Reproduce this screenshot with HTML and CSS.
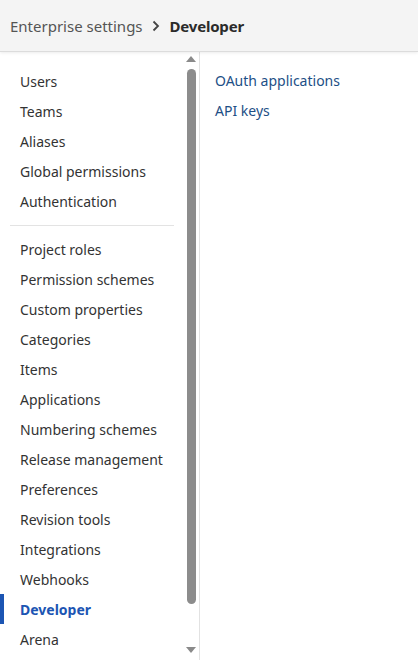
FILE: index.html
```html
<!DOCTYPE html>
<html>
<head>
<meta charset="utf-8">
<link rel="stylesheet" href="styles.css">
</head>
<body>
<header class="topbar">
  <span class="crumb">Enterprise settings</span>
  <svg class="chev" width="8" height="12" viewBox="0 0 8 12"><path d="M1.5 1.5 L6 6 L1.5 10.5" fill="none" stroke="#444" stroke-width="1.8"/></svg>
  <span class="current">Developer</span>
</header>
<div class="main">
  <aside class="side">
    <nav class="nav">
      <div class="group">
        <a class="item">Users</a>
        <a class="item">Teams</a>
        <a class="item">Aliases</a>
        <a class="item">Global permissions</a>
        <a class="item">Authentication</a>
      </div>
      <div class="divider"></div>
      <div class="group">
        <a class="item">Project roles</a>
        <a class="item">Permission schemes</a>
        <a class="item">Custom properties</a>
        <a class="item">Categories</a>
        <a class="item">Items</a>
        <a class="item">Applications</a>
        <a class="item">Numbering schemes</a>
        <a class="item">Release management</a>
        <a class="item">Preferences</a>
        <a class="item">Revision tools</a>
        <a class="item">Integrations</a>
        <a class="item">Webhooks</a>
        <a class="item active">Developer</a>
        <a class="item">Arena</a>
      </div>
    </nav>
    <div class="scrollbar">
      <div class="arrow up"></div>
      <div class="thumb"></div>
      <div class="arrow down"></div>
    </div>
  </aside>
  <section class="content">
    <a class="link">OAuth applications</a>
    <a class="link">API keys</a>
  </section>
</div>
</body>
</html>
```
FILE: styles.css
```css
html, body {
  margin: 0;
  padding: 0;
  height: 100%;
}
body {
  font-family: "Noto Sans", "Open Sans", sans-serif;
  background: #fff;
  width: 418px;
  height: 660px;
  overflow: hidden;
  display: flex;
  flex-direction: column;
}
.topbar {
  height: 51px;
  flex: none;
  background: #f4f4f4;
  border-bottom: 1px solid #dcdcdc;
  box-shadow: 0 1px 3px rgba(0,0,0,0.08);
  display: flex;
  align-items: center;
  padding-left: 10px;
  position: relative;
  z-index: 2;
}
.crumb {
  font-size: 15px;
  color: #555;
}
.chev {
  margin: 1px 10px 0 9px;
}
.current {
  font-size: 15px;
  font-weight: 700;
  color: #2b2b2b;
  letter-spacing: -0.2px;
}
.main {
  flex: 1;
  display: flex;
  min-height: 0;
}
.side {
  width: 199px;
  flex: none;
  border-right: 1px solid #e2e2e2;
  position: relative;
  overflow: hidden;
}
.nav {
  padding-top: 15px;
  padding-right: 25px;
}
.group {
  display: flex;
  flex-direction: column;
}
.item {
  height: 30px;
  line-height: 30px;
  padding-left: 20px;
  font-size: 14px;
  color: #333;
  white-space: nowrap;
  position: relative;
}
.item.active {
  color: #1c55b3;
  font-weight: 700;
}
.item.active::before {
  content: "";
  position: absolute;
  left: 0;
  top: -1px;
  width: 4px;
  height: 30px;
  background: #1c55b3;
}
.divider {
  height: 1px;
  background: #e3e3e3;
  margin: 8px 0 9px 10px;
}
.scrollbar {
  position: absolute;
  right: 3px;
  top: 0;
  bottom: 0;
  width: 10px;
  display: flex;
  flex-direction: column;
  align-items: center;
}
.arrow {
  width: 0;
  height: 0;
  border-left: 5px solid transparent;
  border-right: 5px solid transparent;
}
.arrow.up {
  margin-top: 4px;
  border-bottom: 6px solid #8a8a8a;
}
.arrow.down {
  margin-top: 43px;
  border-top: 6px solid #8a8a8a;
}
.thumb {
  margin-top: 7px;
  width: 9px;
  height: 535px;
  border-radius: 5px;
  background: #8c8c8c;
}
.content {
  flex: 1;
  padding: 14px 0 0 15px;
  display: flex;
  flex-direction: column;
}
.link {
  font-size: 14px;
  line-height: 30px;
  color: #1d4f86;
}
```
